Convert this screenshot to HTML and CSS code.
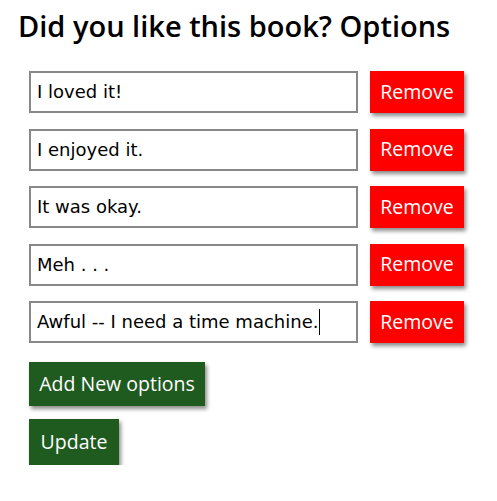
FILE: index.html
```html
<!DOCTYPE html>
<html>
<head>
<meta charset="utf-8">
<link rel="stylesheet" href="styles.css">
</head>
<body>
<div class="page">
  <h1 class="title">Did you like this book? Options</h1>
  <div class="options">
    <div class="row"><div class="field">I loved it!</div><button class="btn remove">Remove</button></div>
    <div class="row"><div class="field">I enjoyed it.</div><button class="btn remove">Remove</button></div>
    <div class="row"><div class="field">It was okay.</div><button class="btn remove">Remove</button></div>
    <div class="row"><div class="field">Meh . . .</div><button class="btn remove">Remove</button></div>
    <div class="row"><div class="field">Awful -- I need a time machine.<span class="caret"></span></div><button class="btn remove">Remove</button></div>
  </div>
  <div class="actions">
    <button class="btn green add">Add New options</button>
    <button class="btn green update">Update</button>
  </div>
</div>
</body>
</html>
```
FILE: styles.css
```css
html, body {
  margin: 0;
  padding: 0;
  background: #fff;
}
.page {
  padding: 9px 0 0 18px;
}
.title {
  margin: 0;
  font-family: "Open Sans", sans-serif;
  font-weight: 600;
  font-size: 29px;
  line-height: 34px;
  color: #000;
}
.options {
  display: flex;
  flex-direction: column;
  gap: 15.5px;
  margin: 28px 0 0 11px;
}
.row {
  display: flex;
  align-items: center;
  gap: 12px;
}
.field {
  box-sizing: border-box;
  width: 329px;
  height: 42px;
  border: 2px solid #888;
  padding: 0 0 1px 6px;
  display: flex;
  align-items: center;
  font-family: "DejaVu Sans", sans-serif;
  font-size: 18px;
  color: #000;
}
.caret {
  display: inline-block;
  width: 1px;
  height: 26px;
  background: #000;
  margin-left: 1px;
}
.btn {
  border: none;
  color: #fff;
  font-family: "Open Sans", sans-serif;
  font-size: 19.5px;
  padding: 0 0 2px;
  box-shadow: 2px 3px 4px rgba(0,0,0,0.45);
  cursor: pointer;
}
.remove {
  width: 94px;
  height: 42px;
  background: #ff0000;
}
.actions {
  display: flex;
  flex-direction: column;
  align-items: flex-start;
  gap: 13px;
  margin: 19px 0 0 11px;
}
.green {
  background: #1f5a1f;
  height: 44px;
}
.add { width: 176px; }
.update { width: 90px; height: 46px; }
```
